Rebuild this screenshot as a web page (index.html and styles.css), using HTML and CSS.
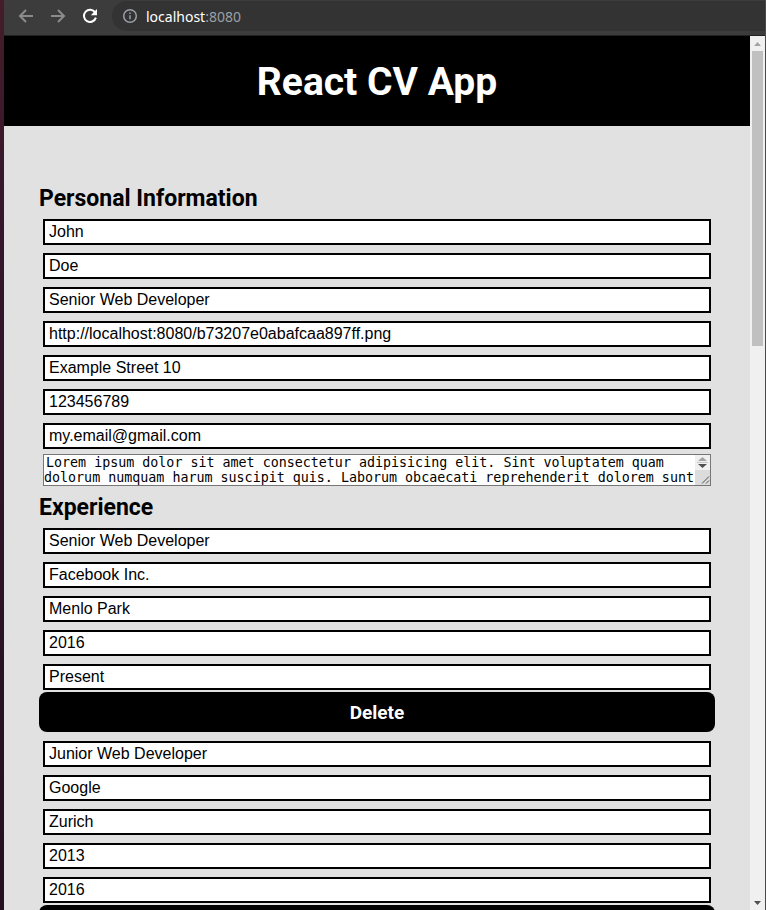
FILE: index.html
```html
<!DOCTYPE html>
<html lang="en">
<head>
<meta charset="utf-8">
<title>React CV App</title>
<link rel="stylesheet" href="styles.css">
</head>
<body>
<div class="browser">
  <nav class="toolbar" aria-label="Browser">
    <button class="tool" type="button" aria-label="Back">
      <svg viewBox="0 0 16 16"><path d="M15 8H2M8 2L2 8l6 6"/></svg>
    </button>
    <button class="tool" type="button" aria-label="Forward">
      <svg viewBox="0 0 16 16"><path d="M1 8h13M8 2l6 6-6 6"/></svg>
    </button>
    <button class="tool tool-active" type="button" aria-label="Reload">
      <svg viewBox="0 0 16 16"><path d="M13.2 4.6A6.1 6.1 0 1 0 13.9 9.6"/><path class="solid" d="M15 1v6.2H8.800z"/></svg>
    </button>
    <div class="address">
      <svg class="info" viewBox="0 0 16 16"><circle cx="8" cy="8" r="6.3"/><path d="M8 7.2v4M8 4.4v1.6"/></svg>
      <a class="url" href="#top">localhost<span class="port">:8080</span></a>
    </div>
  </nav>
  <div class="viewport">
    <div class="page" id="top">
      <header class="banner"><h1>React CV App</h1></header>
      <main class="content">
        <section>
          <h2>Personal Information</h2>
          <form class="fields">
            <input aria-label="First name" value="John">
            <input aria-label="Last name" value="Doe">
            <input aria-label="Title" value="Senior Web Developer">
            <input aria-label="Photo" value="http://localhost:8080/b73207e0abafcaa897ff.png">
            <input aria-label="Address" value="Example Street 10">
            <input aria-label="Phone number" value="123456789">
            <input aria-label="Email" value="my.email@gmail.com">
          </form>
          <div class="description">
            <textarea aria-label="Description" rows="2">Lorem ipsum dolor sit amet consectetur adipisicing elit. Sint voluptatem quam dolorum numquam harum suscipit quis. Laborum obcaecati reprehenderit dolorem sunt</textarea>
            <svg class="grip" viewBox="0 0 15 30"><path fill="#f0f0f0" d="M0 0h15v15H0z"/><path fill="#dcdcdc" d="M0 15h15v15H0z"/><path fill="#c8c8c8" d="M2 7h11v1H2z"/><path fill="#a3a3a3" d="M3 6h9L7.500 2z"/><path fill="#505050" d="M3 9h9l-4.500 4z"/><path stroke="#505050" d="M7 28.500l7-7M11 28.500l3-3"/></svg>
          </div>
        </section>
        <section>
          <h2>Experience</h2>
          <form class="fields">
            <input aria-label="Position" value="Senior Web Developer">
            <input aria-label="Company" value="Facebook Inc.">
            <input aria-label="City" value="Menlo Park">
            <input aria-label="From" value="2016">
            <input aria-label="To" value="Present">
          </form>
          <button class="delete" type="button">Delete</button>
          <form class="fields">
            <input aria-label="Position" value="Junior Web Developer">
            <input aria-label="Company" value="Google">
            <input aria-label="City" value="Zurich">
            <input aria-label="From" value="2013">
            <input aria-label="To" value="2016">
          </form>
          <button class="delete" type="button" aria-label="Delete"></button>
        </section>
      </main>
    </div>
    <div class="scrollbar" aria-hidden="true">
      <svg class="arrow" viewBox="0 0 15 15"><path fill="#a3a3a3" d="M4 10h7L7.500 6z"/></svg>
      <div class="track"><div class="thumb"></div></div>
      <svg class="arrow" viewBox="0 0 15 15"><path fill="#505050" d="M4 6h7l-3.500 4z"/></svg>
    </div>
  </div>
</div>
</body>
</html>
```
FILE: styles.css
```css
* { box-sizing: border-box; }

body {
  margin: 0;
  height: 100vh;
  overflow: hidden;
  padding-left: 4px;
  background: linear-gradient(#451d29, #35162c 25%, #230f20);
  font-family: "Liberation Sans", Arial, sans-serif;
}

.browser {
  display: flex;
  flex-direction: column;
  height: 100%;
  border-right: 1px solid #4a4a4a;
}

.toolbar {
  display: flex;
  flex: none;
  align-items: center;
  height: 36px;
  padding: 1px 0 4px 14px;
  background: #3c3c3c;
  border-bottom: 1px solid #222;
}

.tool {
  width: 16px;
  height: 16px;
  margin-right: 16px;
  padding: 0;
  border: 0;
  background: none;
  color: #8b8b8b;
}

.tool-active { color: #fff; }

.toolbar svg {
  display: block;
  width: 16px;
  height: 16px;
  fill: none;
  stroke: currentColor;
  stroke-width: 2;
}

.toolbar .solid { fill: currentColor; stroke: none; }

.address {
  display: flex;
  flex: 1;
  align-items: center;
  gap: 8px;
  height: 30px;
  margin-left: -2px;
  padding-left: 10px;
  border-radius: 15px 0 0 15px;
  background: #333;
}

.toolbar .info { color: #9aa0a6; stroke-width: 1.5; }

.url {
  color: #fff;
  font: 14px "Noto Sans", sans-serif;
  text-decoration: none;
}

.port { color: #9aa0a6; }

.viewport {
  display: flex;
  flex: 1;
  min-height: 0;
}

.page {
  flex: 1;
  overflow: hidden;
  background: #e1e1e1;
}

.banner {
  display: flex;
  align-items: center;
  justify-content: center;
  height: 90px;
  padding-top: 2px;
  background: #000;
  color: #fff;
}

h1, h2, .delete { font-family: Roboto, sans-serif; font-weight: 700; }

h1 { margin: 0; font-size: 39px; }

.content { padding: 57px 35px; }

h2 {
  margin: 0;
  padding-bottom: 4px;
  font-size: 23px;
  line-height: 32px;
}

.fields {
  display: flex;
  flex-direction: column;
  gap: 8px;
  padding: 0 4px 2px;
}

.fields input {
  width: 100%;
  height: 26px;
  padding: 0 4px;
  border: 2px solid #000;
  border-radius: 0;
  background: #fff;
  color: #000;
  font: 16px "Liberation Sans", Arial, sans-serif;
}

.description {
  position: relative;
  margin: 3px 4px 6px;
}

.description textarea {
  display: block;
  width: 100%;
  height: 32px;
  padding: 0 15px 0 0;
  overflow: hidden;
  resize: none;
  border: 1px solid #767676;
  border-radius: 0;
  background: #fff;
  color: #000;
  font-family: "DejaVu Sans Mono", monospace;
  line-height: 15px;
  text-indent: 2px;
}

.grip {
  position: absolute;
  top: 1px;
  right: 1px;
  width: 15px;
  height: 30px;
}

.delete {
  display: block;
  width: 100%;
  height: 40px;
  margin-bottom: 9px;
  border: 0;
  border-radius: 8px;
  background: #000;
  color: #fff;
  font-size: 19px;
}

.scrollbar {
  display: flex;
  flex: none;
  flex-direction: column;
  width: 15px;
  background: #f0f0f0;
}

.arrow { display: block; width: 15px; height: 15px; }

.track { flex: 1; padding: 0 2px; }

.thumb { height: 35%; background: #c0c0c0; }
```
